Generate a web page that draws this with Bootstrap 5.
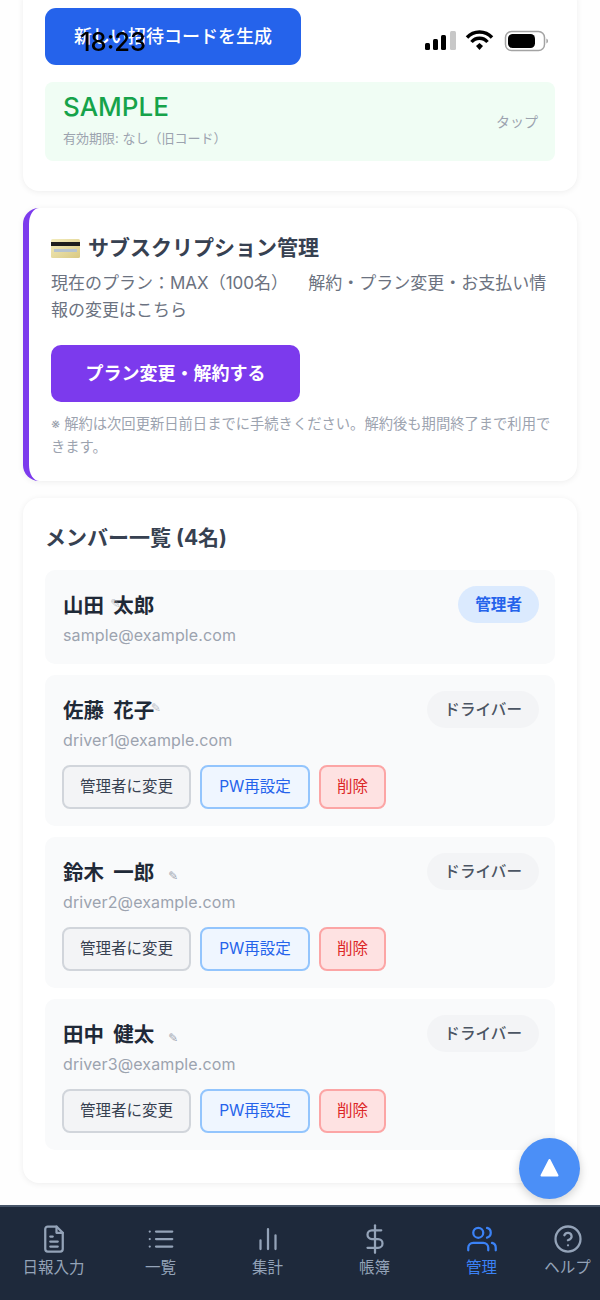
<!DOCTYPE html>
<html lang="ja">
<head>
  <meta charset="UTF-8" />
  <meta name="viewport" content="width=device-width, initial-scale=1.0" />
  <title>管理</title>
  <link href="https://cdn.jsdelivr.net/npm/bootstrap@5.3.3/dist/css/bootstrap.min.css" rel="stylesheet">
  <style>
    html, body { height: 1300px; overflow: hidden; }
    body { background: #fefefe; font-family: Inter, "Noto Sans CJK JP", sans-serif; color: #1f2937; }

    .page-wrap { margin-top: -14px; padding: 0 23px; display: flex; flex-direction: column; gap: 17px; }
    .panel { border: 0; border-radius: 16px; background: #fff; box-shadow: 0 1px 6px rgba(0,0,0,.07); }
    .panel-invite { padding: 22px 22px 30px; }
    .panel-sub { padding: 26px 22px 23px 22px; border-left: 6px solid #7c3aed; }
    .panel-members { padding: 24px 22px 33px; }

    .btn-invite { background: #2563eb; color: #fff; width: 256px; height: 57px; border-radius: 11px; font-size: 18px; font-weight: 500; border: 0; }
    .code-box { background: #f0fdf4; border-radius: 8px; margin-top: 17px; height: 79px; padding: 0 17px 0 18px; }
    .code-value { color: #16a34a; font-size: 26px; line-height: 30px; font-weight: 500; margin-top: -4px; }
    .code-note { color: #9ca3af; font-size: 13px; line-height: 18px; margin-top: 7px; }
    .code-tap { color: #9ca3af; font-size: 14px; }

    .sub-title { font-size: 21px; font-weight: 600; color: #374151; line-height: 28px; }
    .sub-text { font-size: 17px; line-height: 27px; color: #6b7280; margin: 8px 0 21px; }
    .btn-plan { background: #7c3aed; color: #fff; width: 249px; height: 57px; border-radius: 10px; font-size: 18px; font-weight: 600; border: 0; }
    .sub-note { font-size: 14.3px; line-height: 23px; color: #9ca3af; margin: 10px 0 0; }

    .members-title { font-size: 21px; font-weight: 700; color: #374151; line-height: 30px; margin: 1px 0 17px; }
    .member-row { background: #f9fafb; border-radius: 10px; padding: 16px 16px 17px 18px; margin-bottom: 11px; }
    .member-row:last-child { margin-bottom: 0; }
    .member-name { font-size: 20.5px; font-weight: 600; height: 37px; line-height: 39px; color: #1f2937; word-spacing: 4px; }
    .member-mail { font-size: 16px; line-height: 24px; color: #9ca3af; letter-spacing: .12px; }
    .pencil { font-family: "DejaVu Sans", sans-serif; font-size: 12px; line-height: 1; color: #9ca3af; font-weight: 400; }
    .pencil-over { position: absolute; top: 11px; }
    .pencil-first { left: 47px; font-size: 13px; opacity: .6; }
    .pencil-second { left: 88px; opacity: .7; }
    .pencil-rest { margin-left: 14px; }
    .role-tag { font-size: 15.6px; font-weight: 500; line-height: 37px; height: 37px; padding: 0 17px; border-radius: 19px; }
    .role-admin { background: #dbeafe; color: #2563eb; font-weight: 600; }
    .role-driver { background: #f3f4f6; color: #4b5563; }
    .act-row { display: flex; gap: 9px; margin: 13px 0 0 -1px; }
    .act-btn { height: 44px; border-radius: 8px; border: 2px solid; font-size: 15.5px; padding: 0; }
    .act-role { width: 129px; background: #f3f4f6; border-color: #d1d5db; color: #374151; }
    .act-pw { width: 110px; background: #eff6ff; border-color: #93c5fd; color: #2563eb; }
    .act-del { width: 67px; background: #fee2e2; border-color: #fca5a5; color: #dc2626; }

    /* overlays */
    .status-bar { position: fixed; top: 0; left: 0; width: 600px; height: 60px; pointer-events: none; }
    .status-time { position: absolute; left: 80px; top: 27px; font-size: 25.5px; line-height: 30px; font-weight: 500; color: #000; font-family: Inter, sans-serif; }
    .status-icons { position: absolute; left: 425px; top: 30px; }
    .fab { position: fixed; left: 519px; top: 1138px; width: 61px; height: 61px; border-radius: 50%; background: #4b8ff7; border: 0; padding: 0 0 2px; box-shadow: 0 3px 10px rgba(0,0,0,.18); }
    .tabbar { position: fixed; left: 0; top: 1205px; width: 600px; height: 95px; background: #1e293b; border-top: 2px solid #475569; display: flex; }
    .tab-item { width: 107px; padding-top: 17px; text-align: center; color: #94a3b8; font-size: 15.5px; line-height: 20px; }
    .tab-item:last-child { width: 65px; white-space: nowrap; }
    .tab-item svg { display: block; margin: 0 auto 4px; fill: none; stroke: currentColor; stroke-width: 1.8; stroke-linecap: round; stroke-linejoin: round; }
    .tab-active { color: #3b82f6; }
  </style>
</head>
<body>

  <div class="page-wrap">

    <!-- 招待コード -->
    <div class="card panel panel-invite">
      <button class="btn btn-invite">新しい招待コードを生成</button>
      <div class="code-box d-flex justify-content-between align-items-center">
        <div>
          <div class="code-value">SAMPLE</div>
          <div class="code-note">有効期限: なし（旧コード）</div>
        </div>
        <div class="code-tap">タップ</div>
      </div>
    </div>

    <!-- サブスクリプション -->
    <div class="card panel panel-sub">
      <div class="sub-title d-flex align-items-center gap-2">
        <svg width="29" height="19" viewBox="0 0 29 19">
          <defs>
            <linearGradient id="cardGold" x1="0" y1="0" x2="1" y2="1">
              <stop offset="0" stop-color="#f3ecbd" />
              <stop offset="1" stop-color="#d9c982" />
            </linearGradient>
          </defs>
          <rect width="29" height="19" rx="1.5" fill="url(#cardGold)" />
          <rect y="3" width="29" height="4" fill="#1c1c1c" />
          <rect x="3" y="10" width="23" height="3" fill="#b6c3cf" />
        </svg>
        <span>サブスクリプション管理</span>
      </div>
      <p class="sub-text">現在のプラン：MAX（100名）　&ensp;&thinsp;解約・プラン変更・お支払い情報の変更はこちら</p>
      <button class="btn btn-plan">プラン変更・解約する</button>
      <p class="sub-note">※ 解約は次回更新日前日までに手続きください。解約後も期間終了まで利用できます。</p>
    </div>

    <!-- メンバー一覧 -->
    <div class="card panel panel-members">
      <div class="members-title">メンバー一覧 (4名)</div>
      <div id="memberList"></div>
    </div>
  </div>

  <!-- ステータスバー -->
  <div class="status-bar">
    <div class="status-time">18:23</div>
    <svg class="status-icons" width="124" height="22" viewBox="0 0 124 22">
      <rect x="0" y="13" width="5" height="7" rx="1.5" fill="#000" />
      <rect x="8" y="9" width="5" height="11" rx="1.5" fill="#000" />
      <rect x="16" y="5" width="5" height="15" rx="1.5" fill="#000" />
      <rect x="25" y="1" width="6" height="19" rx="1.5" fill="#c8c8c8" />
      <path d="M42 7.5a17 17 0 0 1 25 0" fill="none" stroke="#000" stroke-width="3.4" />
      <path d="M46.5 12a10.5 10.5 0 0 1 16 0" fill="none" stroke="#000" stroke-width="3.4" />
      <path d="M51 16l3.5-3 3.5 3-3.500 4z" fill="#000" />
      <rect x="80.500" y="2.500" width="39" height="19" rx="6" fill="none" stroke="#a3a3a3" stroke-width="1.500" transform="translate(0 -1)" />
      <rect x="83" y="4" width="27" height="14" rx="4.500" fill="#000" />
      <path d="M121.500 8.500a3 3 0 0 1 0 5z" fill="#8a8a8a" />
    </svg>
  </div>

  <!-- トップへ戻る -->
  <button class="fab" aria-label="top">
    <svg width="21" height="21" viewBox="0 0 21 21" class="d-block mx-auto">
      <path d="M10.500 3L18.500 18.500H2.500Z" fill="#fff" stroke="#fff" stroke-width="2" stroke-linejoin="round" />
    </svg>
  </button>

  <!-- タブバー -->
  <nav class="tabbar">
    <div class="tab-item">
      <svg width="30" height="30" viewBox="0 0 24 24"><path d="M14 2H7a2 2 0 0 0-2 2v16a2 2 0 0 0 2 2h10a2 2 0 0 0 2-2V7z" /><path d="M14 2v5h5" /><path d="M9 10h2M9 14h6M9 18h6" /></svg>
      日報入力
    </div>
    <div class="tab-item">
      <svg width="30" height="30" viewBox="0 0 24 24"><path d="M8 6h13M8 12h13M8 18h13M3 6h.01M3 12h.01M3 18h.01" /></svg>
      一覧
    </div>
    <div class="tab-item">
      <svg width="30" height="30" viewBox="0 0 24 24"><path d="M12 20V4M18 20V9M6 20v-7" /></svg>
      集計
    </div>
    <div class="tab-item">
      <svg width="30" height="30" viewBox="0 0 24 24"><path d="M12 1v22" /><path d="M17 5H9.500a3.500 3.500 0 0 0 0 7h5a3.500 3.500 0 0 1 0 7H6" /></svg>
      帳簿
    </div>
    <div class="tab-item tab-active">
      <svg width="30" height="30" viewBox="0 0 24 24"><path d="M17 21v-2a4 4 0 0 0-4-4H5a4 4 0 0 0-4 4v2" /><circle cx="9" cy="7" r="4" /><path d="M23 21v-2a4 4 0 0 0-3-3.870" /><path d="M16 3.130a4 4 0 0 1 0 7.750" /></svg>
      管理
    </div>
    <div class="tab-item">
      <svg width="30" height="30" viewBox="0 0 24 24"><circle cx="12" cy="12" r="10" /><path d="M9.100 9a3 3 0 0 1 5.800 1c0 2-3 3-3 3" /><path d="M12 17h.01" /></svg>
      ヘルプ
    </div>
  </nav>

  <script src="https://cdn.jsdelivr.net/npm/bootstrap@5.3.3/dist/js/bootstrap.bundle.min.js"></script>
  <script>
    const members = [
      { name: "山田 太郎", mail: "sample@example.com", admin: true, pencil: "pencil-first" },
      { name: "佐藤 花子", mail: "driver1@example.com", pencil: "pencil-second" },
      { name: "鈴木 一郎", mail: "driver2@example.com" },
      { name: "田中 健太", mail: "driver3@example.com" }
    ];

    const list = document.getElementById("memberList");
    members.forEach(m => {
      const pencil = m.pencil
        ? `<span class="pencil pencil-over ${m.pencil}">✎</span>`
        : `<span class="pencil pencil-rest">✎</span>`;
      const actions = m.admin ? "" : `
        <div class="act-row">
          <button class="btn act-btn act-role">管理者に変更</button>
          <button class="btn act-btn act-pw">PW再設定</button>
          <button class="btn act-btn act-del">削除</button>
        </div>`;
      list.insertAdjacentHTML("beforeend", `
        <div class="member-row">
          <div class="d-flex justify-content-between align-items-start">
            <div class="member-name position-relative">${m.name}${pencil}</div>
            <div class="role-tag ${m.admin ? "role-admin" : "role-driver"}">${m.admin ? "管理者" : "ドライバー"}</div>
          </div>
          <div class="member-mail">${m.mail}</div>
          ${actions}
        </div>`);
    });
  </script>
</body>
</html>
